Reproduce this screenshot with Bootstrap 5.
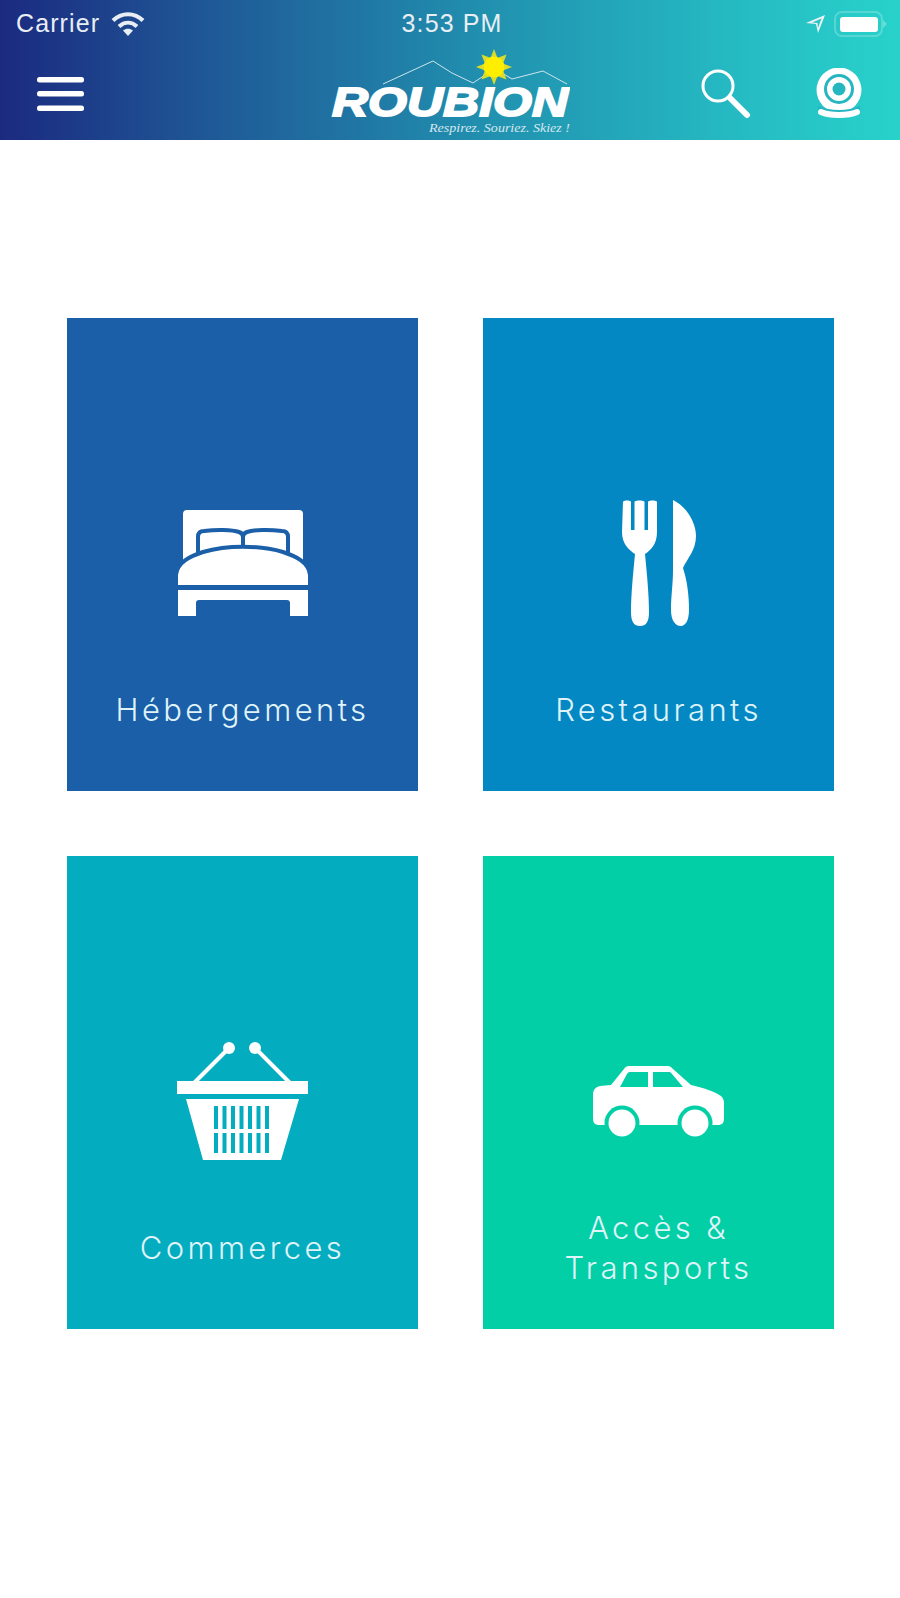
<!DOCTYPE html>
<html lang="fr">
<head>
  <meta charset="UTF-8">
  <title>Roubion</title>
  <link href="https://cdn.jsdelivr.net/npm/bootstrap@5.3.0/dist/css/bootstrap.min.css" rel="stylesheet">
  <style>
    body { background: #fff; font-family: "Liberation Sans", Arial, sans-serif; }
    .app-head { height: 140px; background: linear-gradient(90deg, #1b2a80 0%, #1f5c98 25%, #2192b0 55%, #25b8c2 80%, #28d2ca 100%); color: #fff; }
    .status-row { height: 47px; padding: 0 12px 0 16px; }
    .status-txt { font-size: 25px; letter-spacing: 1.1px; line-height: 1; color: #e8eef4; }
    .status-side { width: 330px; }
    .status-wifi { margin-left: 3px; }
    .nav-row { height: 93px; padding: 0 38px 0 37px; }
    .nav-side { width: 200px; }
    .nav-tools { gap: 65px; }
    .logo-wrap { width: 240px; height: 90px; margin-top: 1px; }
    .burger { width: 47px; height: 34px; }
    .tile-grid { display: grid; grid-template-columns: 351px 351px; grid-auto-rows: 473px; gap: 65px; padding: 178px 66px 0 67px; }
    .tile { color: #dff3f8; text-align: center; }
    .tile-slot { height: 130px; margin-top: 180px; }
    .tile-label { height: 80px; margin-top: 42px; font-family: Inter, "Liberation Sans", sans-serif; font-weight: 300; font-size: 31px; line-height: 40px; letter-spacing: 3.4px; }
    .bg-heb { background: #1a5fa8; }
    .bg-res { background: #0388c4; }
    .bg-com { background: #04acc0; }
    .bg-acc { background: #02cfa6; }
    .logo-word { font-family: "Liberation Sans", Arial, sans-serif; font-weight: 700; font-style: italic; font-size: 40px; }
    .logo-tag { font-family: "Liberation Serif", serif; font-style: italic; font-size: 13px; }
  </style>
</head>
<body>
  <header class="app-head">
    <div class="status-row d-flex align-items-center justify-content-between">
      <div class="status-side d-flex align-items-center gap-2">
        <span class="status-txt">Carrier</span>
        <svg class="status-wifi" width="34" height="25" viewBox="0 0 34 25" fill="none" stroke="#e8eef4" stroke-width="4">
          <path d="M2 9.500C10.500 1 23.500 1 32 9.500"/>
          <path d="M8 15.500C13.500 10.500 20.500 10.500 26 15.500"/>
          <path d="M17 25l-5-5.500c3-2.500 7-2.500 10 0z" fill="#e8eef4" stroke="none"/>
        </svg>
      </div>
      <span class="status-txt">3:53 PM</span>
      <div class="status-side d-flex align-items-center justify-content-end gap-2">
        <svg width="20" height="20" viewBox="0 0 20 20"><path fill-rule="evenodd" d="M0 9L19 1 12 19 10 10zM6 8.500L11.500 9 12 14 15.500 4.500z" fill="#eef4f6"/></svg>
        <svg width="54" height="26" viewBox="0 0 54 26">
          <rect x="1" y="1" width="47" height="24" rx="7" fill="none" stroke="#fff" stroke-opacity=".22" stroke-width="2"/>
          <path d="M49 9l4 4-4 4z" fill="#fff" fill-opacity=".3"/>
          <rect x="6" y="6" width="38" height="15" rx="3" fill="#fff"/>
        </svg>
      </div>
    </div>
    <div class="nav-row d-flex align-items-center justify-content-between">
      <div class="nav-side">
        <svg class="burger d-block" viewBox="0 0 47 34" fill="#fff">
          <rect y="0" width="47" height="5.500" rx="2.500"/>
          <rect y="14" width="47" height="5.500" rx="2.500"/>
          <rect y="28.500" width="47" height="5.500" rx="2.500"/>
        </svg>
      </div>
      <svg class="logo-wrap" viewBox="330 48 240 90">
        <path d="M383 83L433 60 452 72 473 82 488 72M502 72L512 78 543 70 567 83" fill="none" stroke="#cfe4ec" stroke-width="1"/>
        <g fill="#d9dd2a">
          <path d="M494 48l3.500 9h-7zM494 84l3.500-9h-7zM476 66l9-3.500v7zM512 66l-9-3.500v7z"/>
          <path d="M481.500 53.500l8 3-5 5zM506.500 53.500l-8 3 5 5zM481.500 78.500l8-3-5-5zM506.500 78.500l-8-3 5-5z"/>
        </g>
        <circle cx="494" cy="66" r="10.500" fill="#ffee00"/>
        <text class="logo-word" x="332" y="115" textLength="236" lengthAdjust="spacingAndGlyphs" fill="#fff" stroke="#fff" stroke-width="1.800">ROUBION</text>
        <text class="logo-tag" x="429" y="131" textLength="141" lengthAdjust="spacingAndGlyphs" fill="#d5e8ee">Respirez. Souriez. Skiez !</text>
      </svg>
      <div class="nav-side nav-tools d-flex align-items-center justify-content-end">
        <svg width="50" height="52" viewBox="0 0 50 52" fill="none" stroke="#fff">
          <circle cx="17" cy="18" r="15" stroke-width="3"/>
          <path d="M29 30L46 47" stroke-width="6" stroke-linecap="round"/>
        </svg>
        <svg width="46" height="52" viewBox="0 0 46 52">
          <circle cx="23" cy="22" r="22.500" fill="#fff"/>
          <circle cx="23" cy="21" r="13.500" fill="none" stroke="#25b6c2" stroke-width="3"/>
          <circle cx="23" cy="21" r="6.500" fill="#25b6c2"/>
          <path d="M2 39C14 45 32 45 44 39" fill="none" stroke="#25b6c2" stroke-width="3"/>
          <path d="M5 44C14 48 32 48 41 44" fill="none" stroke="#fff" stroke-width="6" stroke-linecap="round"/>
        </svg>
      </div>
    </div>
  </header>

  <main class="tile-grid">
    <a class="tile bg-heb d-block text-decoration-none">
      <div class="tile-slot d-flex align-items-center justify-content-center">
        <svg width="132" height="106" viewBox="0 0 132 106" fill="#fff">
          <path d="M6 52V4a4 4 0 0 1 4-4H122a4 4 0 0 1 4 4V52z"/>
          <path d="M21 46V27c0-4 2-6 6-6 12-1.500 28-1.500 35 1 3 1 4 3 4 5 0-2 1-4 4-5 7-2.500 23-2.500 35-1 4 0 6 2 6 6V46z" stroke="#1a5fa8" stroke-width="4"/>
          <path d="M66 27V38" stroke="#1a5fa8" stroke-width="4"/>
          <path d="M-1 77V65C0 52 14 46 26 42 50 35 82 35 106 42 118 46 132 52 133 65V77z" stroke="#1a5fa8" stroke-width="4"/>
          <path d="M1 80H131V106H113V93c0-2-1-3-3-3H22c-2 0-3 1-3 3V106H1z"/>
        </svg>
      </div>
      <div class="tile-label d-flex align-items-center justify-content-center">Hébergements</div>
    </a>
    <a class="tile bg-res d-block text-decoration-none">
      <div class="tile-slot d-flex align-items-center justify-content-center">
        <svg width="76" height="126" viewBox="0 0 76 126" fill="#fff">
          <path d="M2 2C2 0 10 0 10 2V30H13.500V2C13.500 0 23.500 0 23.500 2V30H27V2C27 0 36 0 36 2V32C36 44 30 50 24 54 26 75 28 95 28 112 28 122 25 126 19 126 13 126 10 122 10 112 10 95 12 75 14 54 8 50 1 44 1 32z"/>
          <path d="M52 0C65 6 75 22 75 36 75 50 66 59 62 68 66 80 68 95 68 110 68 121 64 126 60 126 54 126 50 120 50 110 50 95 52 85 52 70z"/>
        </svg>
      </div>
      <div class="tile-label d-flex align-items-center justify-content-center">Restaurants</div>
    </a>
    <a class="tile bg-com d-block text-decoration-none">
      <div class="tile-slot d-flex align-items-center justify-content-center">
        <svg width="132" height="118" viewBox="0 0 132 118" fill="#fff">
          <circle cx="52" cy="6" r="6"/><circle cx="78" cy="6" r="6"/>
          <path d="M52 6L17 41M78 6L113 41" stroke="#fff" stroke-width="4" fill="none"/>
          <rect y="39" width="131" height="13"/>
          <path fill-rule="evenodd" d="M9 57H122L104 118H26zM37 64V87H41V64zM45.500 64V87H49.500V64zM54 64V87H58V64zM62.500 64V87H66.500V64zM71 64V87H75V64zM79.500 64V87H83.500V64zM88 64V87H92V64zM37 91V111H41V91zM45.500 91V111H49.500V91zM54 91V111H58V91zM62.500 91V111H66.500V91zM71 91V111H75V91zM79.500 91V111H83.500V91zM88 91V111H92V91z"/>
        </svg>
      </div>
      <div class="tile-label d-flex align-items-center justify-content-center">Commerces</div>
    </a>
    <a class="tile bg-acc d-block text-decoration-none">
      <div class="tile-slot d-flex align-items-center justify-content-center">
        <svg width="132" height="72" viewBox="0 0 132 72" fill="#fff">
          <path fill-rule="evenodd" d="M18 20L31 4C32 2 34 1 36 1H75C77 1 78 2 80 4L98 20C112 23 122 27 128 31 130 33 131 35 131 38V53C131 58 129 60 125 60H6C2 60 0 58 0 53V30C0 24 3 22 7 21zM27 22H55V7H37C36 7 35 7.500 34 9zM60 22H90L79 9C78 7.500 77 7 76 7H60z"/>
          <circle cx="29" cy="58" r="17.500" fill="#02cfa6"/><circle cx="102" cy="58" r="17.500" fill="#02cfa6"/>
          <rect y="60" width="132" height="12" fill="#02cfa6"/>
          <circle cx="29" cy="58" r="13.500"/><circle cx="102" cy="58" r="13.500"/>
        </svg>
      </div>
      <div class="tile-label text-center">Accès &amp;<br>Transports</div>
    </a>
  </main>

  <script src="https://cdn.jsdelivr.net/npm/bootstrap@5.3.0/dist/js/bootstrap.bundle.min.js"></script>
</body>
</html>
